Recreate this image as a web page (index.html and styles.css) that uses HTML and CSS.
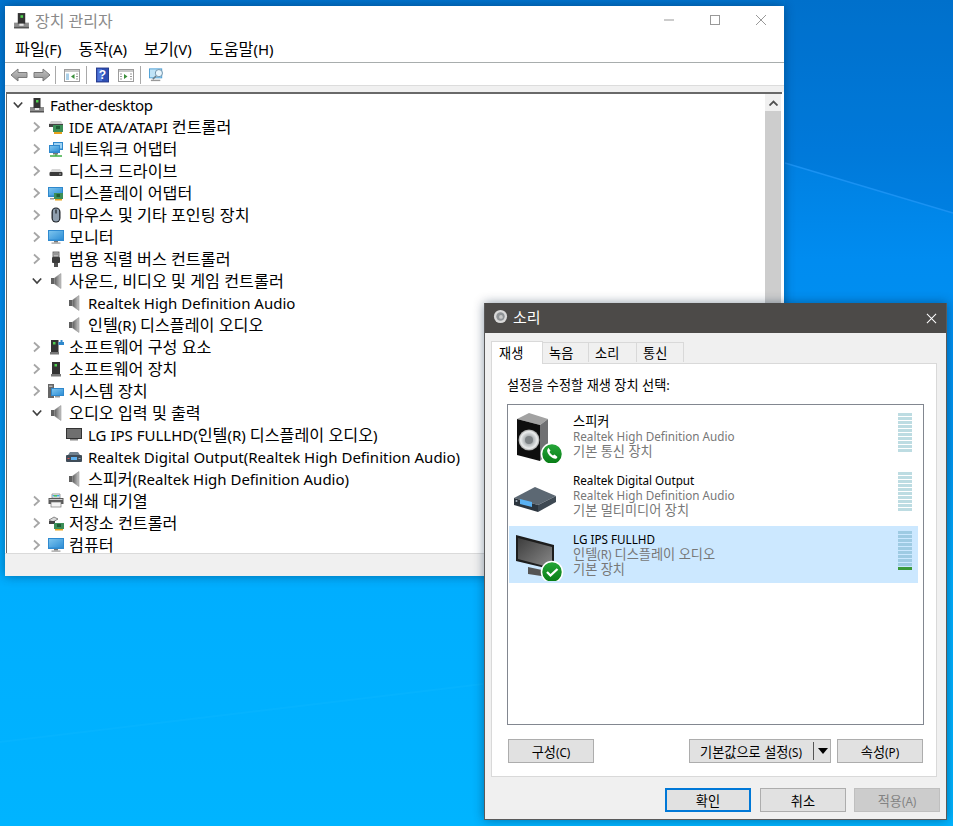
FILE: index.html
```html
<!DOCTYPE html>
<html lang="ko">
<head>
<meta charset="utf-8">
<title>장치 관리자</title>
<link rel="stylesheet" href="styles.css">
</head>
<body>
<svg class="defs" width="0" height="0">
  <defs>
    <linearGradient id="gScreen" x1="0" y1="0" x2="1" y2="1"><stop offset="0" stop-color="#7cc4ee"/><stop offset="1" stop-color="#2f8fd6"/></linearGradient>
    <linearGradient id="gSpk" x1="0" y1="0" x2="1" y2="0"><stop offset="0" stop-color="#5e5e5e"/><stop offset="1" stop-color="#c8c8c8"/></linearGradient>
    <linearGradient id="gArrow" x1="0" y1="0" x2="0" y2="1"><stop offset="0" stop-color="#c4c4c4"/><stop offset="1" stop-color="#8f8f8f"/></linearGradient>
    <radialGradient id="gCone"><stop offset="0" stop-color="#8a8f92"/><stop offset=".45" stop-color="#b5b9bb"/><stop offset=".8" stop-color="#eceeee"/><stop offset="1" stop-color="#9a9a9a"/></radialGradient>
    <linearGradient id="gBadge" x1="0" y1="0" x2="0" y2="1"><stop offset="0" stop-color="#27a83a"/><stop offset="1" stop-color="#067a14"/></linearGradient>
    <linearGradient id="gTv" x1="0" y1="0" x2="1" y2="1"><stop offset="0" stop-color="#3d3d3d"/><stop offset="1" stop-color="#8a8a8a"/></linearGradient>
    <symbol id="chev-r" viewBox="0 0 10 12"><path d="M2 1.500 7 6 2 10.500" fill="none" stroke="#a6a6a6" stroke-width="1.800"/></symbol>
    <symbol id="chev-d" viewBox="0 0 10 12"><path d="M.8 3.500 5 8l4.200-4.500" fill="none" stroke="#404040" stroke-width="1.700"/></symbol>
    <symbol id="i-pc" viewBox="0 0 16 16"><rect x="1" y="10" width="14" height="5" fill="#8d8d8d"/><rect x="1" y="14" width="14" height="1.500" fill="#555"/><rect x="4.500" y="1" width="7" height="10" fill="#333"/><rect x="7" y="3" width="2.500" height="2.500" fill="#4fd04f"/><rect x="6" y="11" width="4" height="2" fill="#e8e8e8"/></symbol>
    <symbol id="i-ide" viewBox="0 0 16 16"><path d="M1 5 3 2h10l2 3z" fill="#cfcfcf"/><rect x="1" y="5" width="14" height="3" fill="#444"/><rect x="5" y="6" width="10" height="7" fill="#3c8f58"/><rect x="8" y="7" width="4" height="3" fill="#1f5c34"/><rect x="6" y="13" width="8" height="2" fill="#e6a21c"/></symbol>
    <symbol id="i-net" viewBox="0 0 16 16"><rect x="5" y="1" width="10" height="8" fill="#2f88cc"/><rect x="6" y="2" width="8" height="5.500" fill="#9fd3f3"/><rect x="1" y="4" width="11" height="8" fill="#2f88cc"/><rect x="2" y="5" width="9" height="5.500" fill="url(#gScreen)"/><rect x="5" y="12" width="5" height="1.500" fill="#777"/><path d="M2 15h12M8 13v2" stroke="#3fae45" stroke-width="1.400"/></symbol>
    <symbol id="i-disk" viewBox="0 0 16 16"><path d="M2 9 4 6h8l2 3z" fill="#d6d6d6"/><rect x="1.500" y="9" width="13" height="4" rx="1" fill="#3a3a3a"/><rect x="11" y="10.500" width="2" height="1" fill="#aaa"/></symbol>
    <symbol id="i-disp" viewBox="0 0 16 16"><rect x="0" y="2" width="15" height="10" fill="#2f88cc"/><rect x="1" y="3" width="13" height="7.500" fill="url(#gScreen)"/><rect x="6" y="8" width="9" height="6" fill="#3c8f58"/><rect x="8.500" y="9" width="3.500" height="3" fill="#1f5c34"/><rect x="7" y="14" width="7" height="1.500" fill="#e6a21c"/><rect x="2" y="13" width="4" height="1.500" fill="#999"/></symbol>
    <symbol id="i-mouse" viewBox="0 0 16 16"><rect x="3.500" y="0.500" width="9" height="15" rx="4.500" fill="#20252b"/><rect x="4.800" y="1.500" width="6.400" height="13" rx="3.200" fill="#8e9dad"/><rect x="7.300" y="2.500" width="1.400" height="4" fill="#2a2f35"/></symbol>
    <symbol id="i-mon" viewBox="0 0 16 16"><rect x="0" y="1" width="16" height="11" fill="#2f8ad0"/><rect x="1" y="2" width="14" height="8.500" fill="url(#gScreen)"/><rect x="6" y="12" width="4" height="1.500" fill="#777"/><rect x="3.500" y="13.500" width="9" height="1.200" fill="#9b9b9b"/></symbol>
    <symbol id="i-usb" viewBox="0 0 16 16"><rect x="5" y="1" width="6" height="5" fill="#b9b9b9" stroke="#555" stroke-width=".8"/><rect x="4" y="6" width="8" height="6" rx="1" fill="#3b3b3b"/><rect x="6" y="12" width="4" height="4" fill="#505050"/><rect x="6.500" y="2.500" width="1" height="1" fill="#333"/><rect x="8.500" y="2.500" width="1" height="1" fill="#333"/></symbol>
    <symbol id="i-spk" viewBox="0 0 16 16"><rect x="3" y="5" width="3.500" height="6" fill="#5f5f5f"/><path d="M6.500 5 13 .5v15L6.500 11z" fill="url(#gSpk)"/><path d="M6.500 5 13 .5v15L6.500 11z" fill="none" stroke="#8b8b8b" stroke-width=".5"/></symbol>
    <symbol id="i-swc" viewBox="0 0 16 16"><rect x="3" y="1" width="7.500" height="12" fill="#333"/><rect x="5" y="3" width="2.500" height="2.500" fill="#4fd04f"/><rect x="2" y="13" width="9" height="2.500" fill="#777"/><path d="M10.500 3h2V1h2v2H16v3h-5.500z" fill="#2f88cc"/></symbol>
    <symbol id="i-swd" viewBox="0 0 16 16"><rect x="4" y="1" width="8" height="12" fill="#333"/><rect x="6.500" y="3" width="2.500" height="2.500" fill="#4fd04f"/><rect x="3" y="13" width="10" height="2.500" fill="#777"/></symbol>
    <symbol id="i-sys" viewBox="0 0 16 16"><rect x="0" y="1" width="6" height="14" fill="#666"/><rect x="1" y="2.500" width="3.500" height="1.500" fill="#b5b5b5"/><rect x="3" y="5" width="13" height="8" fill="#2f88cc"/><rect x="4" y="6" width="11" height="6" fill="url(#gScreen)"/><rect x="7" y="13" width="5" height="1.500" fill="#999"/></symbol>
    <symbol id="i-tv" viewBox="0 0 16 16"><rect x="0" y="1" width="16" height="11" fill="#333"/><rect x="1" y="2" width="14" height="9" fill="#6f6f6f"/><rect x="4" y="12" width="8" height="1.500" fill="#888"/></symbol>
    <symbol id="i-rcv" viewBox="0 0 16 16"><path d="M2 6 4 3h8l2 3z" fill="#70818f"/><rect x="0" y="6" width="16" height="7" rx="1" fill="#3f4c58"/><rect x="5" y="8" width="6" height="3" fill="#5cb0ef"/><rect x="1.500" y="9" width="2" height="1" fill="#d55"/><rect x="12.500" y="9" width="2" height="1" fill="#9ab"/></symbol>
    <symbol id="i-prn" viewBox="0 0 16 16"><path d="M4 1h8v4H4z" fill="#fff" stroke="#777" stroke-width=".7"/><path d="M4.500 2h7v1.500h-7z" fill="#3fa9e0"/><rect x="6" y="2" width="3" height="1.500" fill="#5cc45c"/><rect x="0.500" y="5" width="15" height="6" fill="#5a5a5a"/><rect x="1.500" y="6" width="13" height="1" fill="#cfcfcf"/><rect x="3" y="9" width="10" height="5" fill="#f4f4f4" stroke="#777" stroke-width=".7"/></symbol>
    <symbol id="i-sto" viewBox="0 0 16 16"><path d="M1 5 6 2l4 2-5 3z" fill="#d9d9d9" stroke="#444" stroke-width=".6"/><rect x="1" y="6" width="6" height="3" fill="#444"/><rect x="6" y="8" width="10" height="6" fill="#3c8f58"/><rect x="9" y="9" width="4" height="3" fill="#1f5c34"/><rect x="7" y="14" width="8" height="1.500" fill="#e6a21c"/></symbol>
    <symbol id="b-back" viewBox="0 0 18 16"><path d="M1 8 8 2v3.500h9v5H8V14z" fill="url(#gArrow)" stroke="#7a7a7a"/></symbol>
    <symbol id="b-fwd" viewBox="0 0 18 16"><path d="M17 8 10 2v3.500H1v5h9V14z" fill="url(#gArrow)" stroke="#7a7a7a"/></symbol>
    <symbol id="b-tree" viewBox="0 0 16 16"><rect x=".5" y="2.500" width="15" height="12" fill="#fff" stroke="#9c9c9c"/><rect x="1" y="3" width="14" height="2" fill="#c9c9c9"/><rect x="2" y="6.500" width="3" height="6.500" fill="#a9cfe8"/><path d="M10.500 7v5L7 9.500z" fill="#3b8f3b"/><path d="M12 7h2M12 9.500h2M12 12h2" stroke="#999"/></symbol>
    <symbol id="b-help" viewBox="0 0 14 16"><rect x=".5" y=".5" width="13" height="15" fill="#2d4fb5" stroke="#23378a"/><rect x="1.500" y="1.500" width="5" height="13" fill="#4f74d8"/></symbol>
    <symbol id="b-act" viewBox="0 0 16 16"><rect x=".5" y="2.500" width="15" height="12" fill="#fff" stroke="#9c9c9c"/><rect x="1" y="3" width="14" height="2" fill="#c9c9c9"/><path d="M6 7v5l3.500-2.500z" fill="#3b8f3b"/><path d="M2 7h2M2 9.500h2M2 12h2M12 7h2M12 9.500h2M12 12h2" stroke="#999"/></symbol>
    <symbol id="b-scan" viewBox="0 0 17 16"><rect x=".5" y="1.500" width="13" height="9.500" fill="#bfe3f7" stroke="#4d9fd5"/><rect x="2" y="13" width="10" height="1.500" fill="#999"/><circle cx="10.500" cy="6" r="3.800" fill="#e8f5fc" stroke="#6c8fa8"/><path d="M7.500 9 4 12.500" stroke="#6c7c86" stroke-width="1.600"/></symbol>
  </defs>
</svg>

<main class="desktop">
  <svg class="wallpaper" viewBox="0 0 953 826" aria-hidden="true">
    <polygon class="wp-dark" points="785,0 953,0 953,213 785,163"/>
    <path class="wp-beam" d="M785 163 953 213"/>
    <path class="wp-beam-soft" d="M0 742 483 684"/>
  </svg>

  <section class="win devmgr">
    <header class="dm-title">
      <svg class="title-ico"><use href="#i-pc"/></svg>
      <span class="dm-title-text">장치 관리자</span>
      <div class="caption">
        <svg class="cap-btn" viewBox="0 0 12 12"><path d="M1 6h10" stroke="#999" stroke-width="1"/></svg>
        <svg class="cap-btn" viewBox="0 0 12 12"><rect x="1.500" y="1.500" width="9" height="9" fill="none" stroke="#999"/></svg>
        <svg class="cap-btn" viewBox="0 0 12 12"><path d="M1 1l10 10M11 1 1 11" stroke="#999" stroke-width="1"/></svg>
      </div>
    </header>
    <nav class="menu">
      <span><span class="ko">파일</span>(F)</span><span><span class="ko">동작</span>(A)</span><span><span class="ko">보기</span>(V)</span><span><span class="ko">도움말</span>(H)</span>
    </nav>
    <div class="toolbar">
      <svg class="tb tb-arrow"><use href="#b-back"/></svg>
      <svg class="tb tb-arrow"><use href="#b-fwd"/></svg>
      <i class="tb-sep"></i>
      <svg class="tb"><use href="#b-tree"/></svg>
      <i class="tb-sep"></i>
      <span class="tb-help"><svg class="tb-help-bg"><use href="#b-help"/></svg><b>?</b></span>
      <svg class="tb"><use href="#b-act"/></svg>
      <i class="tb-sep"></i>
      <svg class="tb"><use href="#b-scan"/></svg>
    </div>
    <div class="band"></div>
    <div class="tree-frame">
      <ul class="tree">
        <li class="row root"><svg class="tw"><use href="#chev-d"/></svg><svg class="ico"><use href="#i-pc"/></svg><span class="lbl">Father-desktop</span></li>
        <li class="row"><svg class="tw"><use href="#chev-r"/></svg><svg class="ico"><use href="#i-ide"/></svg><span class="lbl">IDE ATA/ATAPI <span class="ko">컨트롤러</span></span></li>
        <li class="row"><svg class="tw"><use href="#chev-r"/></svg><svg class="ico"><use href="#i-net"/></svg><span class="lbl ko">네트워크 어댑터</span></li>
        <li class="row"><svg class="tw"><use href="#chev-r"/></svg><svg class="ico"><use href="#i-disk"/></svg><span class="lbl ko">디스크 드라이브</span></li>
        <li class="row"><svg class="tw"><use href="#chev-r"/></svg><svg class="ico"><use href="#i-disp"/></svg><span class="lbl ko">디스플레이 어댑터</span></li>
        <li class="row"><svg class="tw"><use href="#chev-r"/></svg><svg class="ico"><use href="#i-mouse"/></svg><span class="lbl ko">마우스 및 기타 포인팅 장치</span></li>
        <li class="row"><svg class="tw"><use href="#chev-r"/></svg><svg class="ico"><use href="#i-mon"/></svg><span class="lbl ko">모니터</span></li>
        <li class="row"><svg class="tw"><use href="#chev-r"/></svg><svg class="ico"><use href="#i-usb"/></svg><span class="lbl ko">범용 직렬 버스 컨트롤러</span></li>
        <li class="row"><svg class="tw"><use href="#chev-d"/></svg><svg class="ico"><use href="#i-spk"/></svg><span class="lbl ko">사운드, 비디오 및 게임 컨트롤러</span></li>
        <li class="row leaf"><svg class="ico"><use href="#i-spk"/></svg><span class="lbl">Realtek High Definition Audio</span></li>
        <li class="row leaf"><svg class="ico"><use href="#i-spk"/></svg><span class="lbl"><span class="ko">인텔</span>(R) <span class="ko">디스플레이 오디오</span></span></li>
        <li class="row"><svg class="tw"><use href="#chev-r"/></svg><svg class="ico"><use href="#i-swc"/></svg><span class="lbl ko">소프트웨어 구성 요소</span></li>
        <li class="row"><svg class="tw"><use href="#chev-r"/></svg><svg class="ico"><use href="#i-swd"/></svg><span class="lbl ko">소프트웨어 장치</span></li>
        <li class="row"><svg class="tw"><use href="#chev-r"/></svg><svg class="ico"><use href="#i-sys"/></svg><span class="lbl ko">시스템 장치</span></li>
        <li class="row"><svg class="tw"><use href="#chev-d"/></svg><svg class="ico"><use href="#i-spk"/></svg><span class="lbl ko">오디오 입력 및 출력</span></li>
        <li class="row leaf"><svg class="ico"><use href="#i-tv"/></svg><span class="lbl">LG IPS FULLHD(<span class="ko">인텔</span>(R) <span class="ko">디스플레이 오디오</span>)</span></li>
        <li class="row leaf"><svg class="ico"><use href="#i-rcv"/></svg><span class="lbl">Realtek Digital Output(Realtek High Definition Audio)</span></li>
        <li class="row leaf"><svg class="ico"><use href="#i-spk"/></svg><span class="lbl"><span class="ko">스피커</span>(Realtek High Definition Audio)</span></li>
        <li class="row"><svg class="tw"><use href="#chev-r"/></svg><svg class="ico"><use href="#i-prn"/></svg><span class="lbl ko">인쇄 대기열</span></li>
        <li class="row"><svg class="tw"><use href="#chev-r"/></svg><svg class="ico"><use href="#i-sto"/></svg><span class="lbl ko">저장소 컨트롤러</span></li>
        <li class="row"><svg class="tw"><use href="#chev-r"/></svg><svg class="ico"><use href="#i-mon"/></svg><span class="lbl ko">컴퓨터</span></li>
      </ul>
      <div class="scrollbar">
        <div class="sb-btn"><svg class="sb-arrow" viewBox="0 0 9 6"><path d="M.5 5.500 4.500 1.500l4 4" fill="none" stroke="#505050" stroke-width="1.800"/></svg></div>
        <div class="sb-track"></div>
      </div>
    </div>
    <div class="statusbar"></div>
  </section>

  <section class="win sound">
    <header class="snd-title">
      <svg class="snd-ico" viewBox="0 0 16 16"><circle cx="8" cy="8" r="7" fill="#d9d9d9"/><circle cx="8" cy="8" r="4.500" fill="#8f9396"/><circle cx="8.500" cy="8.500" r="2" fill="#c9c9c9"/></svg>
      <span>소리</span>
      <svg class="snd-close" viewBox="0 0 12 12"><path d="M1 1l10 10M11 1 1 11" stroke="#fff" stroke-width="1.100"/></svg>
    </header>
    <div class="snd-body">
      <div class="tabs">
        <span class="tab active ko">재생</span>
        <span class="tab t-rec ko">녹음</span>
        <span class="tab t-snd ko">소리</span>
        <span class="tab t-com ko">통신</span>
      </div>
      <div class="panel">
        <p class="prompt ko">설정을 수정할 재생 장치 선택:</p>
        <div class="devlist">
          <div class="dev">
            <div class="dev-ico">
              <svg class="big" viewBox="0 0 50 50">
                <polygon points="3,6 15,0 34,6 26,12" fill="#a2a2a2"/>
                <polygon points="26,12 34,6 34,40 26,48" fill="#6f7072"/>
                <polygon points="3,6 26,12 26,48 3,42" fill="#0e0e0e"/>
                <circle cx="15" cy="27" r="10.500" fill="url(#gCone)"/>
                <circle cx="15" cy="27" r="4" fill="#7d8285"/>
                <circle cx="38" cy="41" r="10.500" fill="url(#gBadge)" stroke="#fff" stroke-width="1.500"/>
                <path d="M33.500 36.500c-1 1.500.5 4.500 2.500 6.500s5 3.500 6.500 2.500l1-1.500-3-2.500-1.500 1c-1-.5-3-2.500-3.500-3.500l1-1.500-2.300-2.800z" fill="#fff"/>
              </svg>
            </div>
            <div class="dev-text"><strong class="ko">스피커</strong><span>Realtek High Definition Audio</span><span class="ko">기본 통신 장치</span></div>
            <div class="meter"><i></i><i></i><i></i><i></i><i></i><i></i><i></i><i></i><i></i><i></i></div>
          </div>
          <div class="dev">
            <div class="dev-ico">
              <svg class="big" viewBox="0 0 50 50">
                <polygon points="0,26 21,15 42,24 24,33" fill="#5c6873"/>
                <polygon points="0,26 24,33 24,40 0,33" fill="#2c353e"/>
                <polygon points="24,33 42,24 42,30 24,40" fill="#3e4953"/>
                <polygon points="6,27 18,30 18,35 6,32" fill="#5ab1f2"/>
                <circle cx="2.500" cy="29" r="1" fill="#a8b4c0"/>
              </svg>
            </div>
            <div class="dev-text"><strong>Realtek Digital Output</strong><span>Realtek High Definition Audio</span><span class="ko">기본 멀티미디어 장치</span></div>
            <div class="meter"><i></i><i></i><i></i><i></i><i></i><i></i><i></i><i></i><i></i><i></i></div>
          </div>
          <div class="dev selected">
            <div class="dev-ico">
              <svg class="big" viewBox="0 0 50 50">
                <polygon points="2,4 40,14 40,39 2,30" fill="#1d1d1d"/>
                <polygon points="4,7 38,16 38,37 4,28" fill="url(#gTv)"/>
                <polygon points="14,36 28,39 34,46 14,43" fill="#555"/>
                <circle cx="38" cy="41" r="10.500" fill="url(#gBadge)" stroke="#fff" stroke-width="1.500"/>
                <path d="M33 41l3.500 3.500L43.500 38" fill="none" stroke="#fff" stroke-width="2.300"/>
              </svg>
            </div>
            <div class="dev-text"><strong>LG IPS FULLHD</strong><span><span class="ko">인텔</span>(R) <span class="ko">디스플레이 오디오</span></span><span class="ko">기본 장치</span></div>
            <div class="meter"><i></i><i></i><i></i><i></i><i></i><i></i><i></i><i></i><i></i><i class="lit"></i></div>
          </div>
        </div>
        <div class="panel-actions">
          <button class="btn"><span><span class="ko">구성</span>(C)</span></button>
          <span class="spacer"></span>
          <button class="btn btn-split"><span class="split-label"><span class="ko">기본값으로 설정</span>(S)</span><i class="split-bar"></i><i class="split-arrow"></i></button>
          <button class="btn"><span><span class="ko">속성</span>(P)</span></button>
        </div>
      </div>
      <div class="dlg-actions">
        <button class="btn btn-default ko">확인</button>
        <button class="btn ko">취소</button>
        <button class="btn btn-disabled"><span><span class="ko">적용</span>(A)</span></button>
      </div>
    </div>
  </section>
</main>
</body>
</html>
```

FILE: styles.css
```css
* { box-sizing: border-box; }
html, body { margin: 0; padding: 0; }
body { width: 953px; height: 826px; overflow: hidden; font-family: "Noto Sans", "Noto Sans CJK KR", sans-serif; color: #000; }
.defs { position: absolute; }
ul { list-style: none; margin: 0; padding: 0; }
p { margin: 0; }

.desktop { position: relative; width: 953px; height: 826px; overflow: hidden;
  background: linear-gradient(180deg, #0074cf 0, #007fe0 150px, #008cf0 260px, #0096f0 450px, #00aeff 585px, #00b4ff 826px); }
.wallpaper { position: absolute; inset: 0; width: 953px; height: 826px; }
.wp-dark { fill: #0060b8; opacity: .16; }
.wp-beam { stroke: #1a92f2; stroke-width: 1.500; fill: none; }
.wp-beam-soft { stroke: #12baff; stroke-width: 2; fill: none; opacity: .3; }

.win { position: absolute; display: flex; flex-direction: column; box-shadow: 0 0 10px rgba(0, 30, 60, .45); }

/* Device Manager */
.devmgr { left: 5px; top: 6px; width: 779px; height: 570px; background: #fff; }
.dm-title { display: flex; align-items: center; height: 31px; flex: none; padding: 0 0 3px 8px; }
.title-ico { width: 17px; height: 17px; flex: none; }
.dm-title-text { margin-left: 5px; font-size: 16px; color: #8a8a8a; }
.caption { margin-left: auto; display: flex; gap: 34px; padding-right: 17px; }
.cap-btn { width: 12px; height: 12px; }
.menu { display: flex; align-items: center; gap: 17px; height: 26px; flex: none; padding: 0 0 2px 10px; font-size: 15px; line-height: 22px; border-bottom: 1px solid #a8adad; }
.menu .ko { font-size: 16.2px; }
.toolbar { display: flex; align-items: center; height: 23px; flex: none; padding: 1px 0 0 5px; border-bottom: 1px solid #dcdcdc; }
.tb { width: 16px; height: 16px; margin-right: 6px; }
.tb-arrow { width: 18px; margin-right: 5px; }
.tb-arrow + .tb-sep { margin-left: -1px; }
.tb-sep { width: 1px; height: 18px; background: #a9a9a9; margin: 0 8px 0 0; }
.tb-help { position: relative; width: 13px; height: 16px; margin: 0 9px 0 1px; display: block; }
.tb-help-bg { width: 13px; height: 16px; display: block; }
.tb-help b { position: absolute; inset: 0; text-align: center; color: #fff; font-size: 12px; line-height: 16px; font-family: "Liberation Sans", sans-serif; }
.band { height: 6px; flex: none; background: #f0f0f0; }
.tree-frame { flex: 1; display: flex; min-height: 0; margin: 0 2px 0 1px; border-top: 2px solid #696969; border-left: 1px solid #696969; }
.tree { flex: 1; min-width: 0; overflow: hidden; font-size: 15px; }
.row { display: flex; align-items: center; height: 22px; padding-left: 25px; white-space: nowrap; }
.row.root { padding-left: 6px; letter-spacing: -.3px; }
.row.leaf { padding-left: 59px; }
.tw { width: 10px; height: 12px; margin-right: 6px; flex: none; }
.ico { width: 16px; height: 16px; margin-right: 5px; flex: none; }
.row.leaf .ico { margin-right: 6px; }
.lbl { line-height: 22px; }
.tree .ko { font-size: 16.2px; }
.scrollbar { width: 17px; flex: none; display: flex; flex-direction: column; padding-right: 1px; }
.sb-btn { height: 17px; background: #f0f0f0; display: flex; align-items: center; justify-content: center; flex: none; }
.sb-arrow { width: 9px; height: 6px; }
.sb-track { flex: 1; background: #cdcdcd; }
.statusbar { height: 23px; flex: none; background: #f0f0f0; border-top: 1px solid #dadada; }

/* Sound dialog */
.sound { left: 484px; top: 303px; width: 463px; height: 517px; background: #f0f0f0; border: 1px solid #5a5a5a; border-top: 0; font-size: 11.7px; }
.sound .ko { font-size: 13.2px; }
.snd-title { display: flex; align-items: center; height: 30px; flex: none; background: #4c4a48; color: #fff; font-size: 15px; padding: 0 0 3px 8px; }
.snd-ico { width: 15px; height: 15px; margin-right: 5px; }
.snd-close { width: 11px; height: 11px; margin-left: auto; margin-right: 9px; margin-top: 3px; }
.snd-body { flex: 1; display: flex; flex-direction: column; padding: 8px 9px 0 6px; }
.tabs { display: flex; align-items: flex-end; height: 22px; flex: none; position: relative; z-index: 1; }
.tab { height: 20px; display: flex; align-items: center; padding-left: 6px; background: #f0f0f0; border: 1px solid #d9d9d9; border-bottom: 0; border-left: 0; margin-bottom: 1px; }
.tab.active { width: 52px; height: 23px; padding: 1px 0 0 7px; background: #fff; border-left: 1px solid #d9d9d9; margin-bottom: -1px; align-items: flex-start; }
.t-rec { width: 46px; }
.t-snd { width: 48px; }
.t-com { width: 47px; }
.panel { height: 414px; flex: none; background: #fff; border: 1px solid #d9d9d9; padding: 13px 12px 0 15px; display: flex; flex-direction: column; }
.prompt { height: 27px; flex: none; line-height: 17px; }
.devlist { height: 321px; flex: none; border: 1px solid #828790; padding: 3px 5px 0 1px; background: #fff; }
.dev { display: flex; height: 59px; color: #777; }
.dev.selected { height: 57px; background: #cce8ff; }
.dev-ico { width: 64px; flex: none; padding: 5px 0 0 5px; }
.big { width: 50px; height: 50px; display: block; }
.dev-text { flex: 1; display: flex; flex-direction: column; padding-top: 6px; line-height: 15px; white-space: nowrap; }
.dev-text strong { font-weight: 400; color: #000; }
.meter { width: 14px; flex: none; margin-right: 6px; padding-top: 5px; display: flex; flex-direction: column; gap: 1px; }
.meter i { display: block; height: 3px; background: #bddce2; }
.dev.selected .meter i { background: #9ecbe3; }
.dev.selected .meter i.lit { background: #3a9a3a; }
.panel-actions { display: flex; gap: 6px; margin-top: 14px; padding: 0 1px; }
.spacer { flex: 1; }
.btn { width: 86px; height: 24px; padding: 0; background: #e1e1e1; border: 1px solid #adadad; font: inherit; color: #000; display: flex; align-items: center; justify-content: center; flex: none; }
.btn-split { width: 142px; justify-content: flex-start; padding-left: 2px; }
.split-label { width: 118px; text-align: center; flex: none; }
.split-bar { width: 1px; height: 18px; background: #555; margin-left: 3px; flex: none; }
.split-arrow { width: 0; height: 0; margin-left: 4px; border: 5px solid transparent; border-top: 6px solid #000; border-bottom: 0; flex: none; }
.dlg-actions { display: flex; justify-content: flex-end; gap: 9px; padding: 11px 0 0; margin-right: -3px; }
.btn-default { border: 2px solid #0078d7; }
.btn-default + .btn { margin-right: -1px; }
.btn-disabled { background: #ccc; border-color: #bfbfbf; color: #838383; }
```
